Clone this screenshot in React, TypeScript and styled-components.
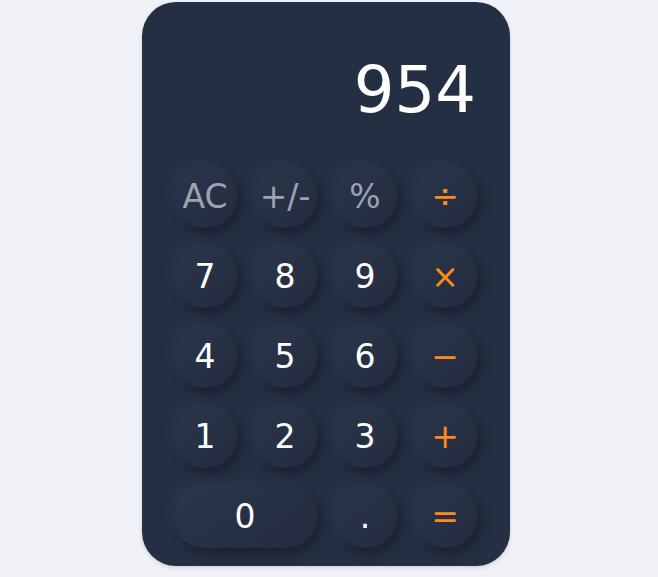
import React from "react";
import styled, { createGlobalStyle } from "styled-components";

const Global = createGlobalStyle`
  html, body { margin: 0; padding: 0; background: #f0f2f7; }
  body { font-family: "DejaVu Sans", Verdana, sans-serif; }
`;

const Page = styled.div`
  display: flex;
  justify-content: center;
  padding: 2px 6px 0 0;
  min-height: 577px;
  box-sizing: border-box;
`;

const Card = styled.div`
  width: 368px;
  height: 564px;
  box-sizing: border-box;
  background: #252f44;
  border-radius: 34px;
  padding: 0 32px 0 31px;
  display: flex;
  flex-direction: column;
  box-shadow: 0 2px 4px rgba(30, 40, 60, 0.15);
`;

const Display = styled.div`
  height: 162px;
  display: flex;
  justify-content: flex-end;
  align-items: flex-start;
  padding-top: 56px;
  padding-right: 2px;
  box-sizing: border-box;
  color: #ffffff;
  font-size: 64px;
  line-height: 1;
  font-family: "DejaVu Sans", Verdana, sans-serif;
`;

const Grid = styled.div`
  display: grid;
  grid-template-columns: repeat(4, 64px);
  grid-auto-rows: 64px;
  gap: 16px;
`;

type Kind = "fn" | "num" | "op";

const Key = styled.button<{ $kind: Kind; $wide?: boolean }>`
  grid-column: ${(p) => (p.$wide ? "span 2" : "auto")};
  border: none;
  border-radius: 32px;
  margin: 0;
  padding: 0;
  display: flex;
  align-items: center;
  justify-content: center;
  font-family: "DejaVu Sans", Verdana, sans-serif;
  font-size: 33px;
  color: ${(p) =>
    p.$kind === "fn" ? "#9ca3af" : p.$kind === "op" ? "#ff8a1c" : "#ffffff"};
  background: linear-gradient(145deg, #2b354a, #232c40);
  box-shadow: 5px 6px 10px #1b2232, -4px -4px 8px rgba(52, 63, 86, 0.35);
  cursor: pointer;
`;

const keys: { label: string; kind: Kind; wide?: boolean }[] = [
  { label: "AC", kind: "fn" },
  { label: "+/-", kind: "fn" },
  { label: "%", kind: "fn" },
  { label: "÷", kind: "op" },
  { label: "7", kind: "num" },
  { label: "8", kind: "num" },
  { label: "9", kind: "num" },
  { label: "×", kind: "op" },
  { label: "4", kind: "num" },
  { label: "5", kind: "num" },
  { label: "6", kind: "num" },
  { label: "−", kind: "op" },
  { label: "1", kind: "num" },
  { label: "2", kind: "num" },
  { label: "3", kind: "num" },
  { label: "+", kind: "op" },
  { label: "0", kind: "num", wide: true },
  { label: ".", kind: "num" },
  { label: "=", kind: "op" },
];

export default function App() {
  return (
    <>
      <Global />
      <Page>
        <Card>
          <Display>954</Display>
          <Grid>
            {keys.map((k) => (
              <Key key={k.label} $kind={k.kind} $wide={k.wide}>
                {k.label}
              </Key>
            ))}
          </Grid>
        </Card>
      </Page>
    </>
  );
}
